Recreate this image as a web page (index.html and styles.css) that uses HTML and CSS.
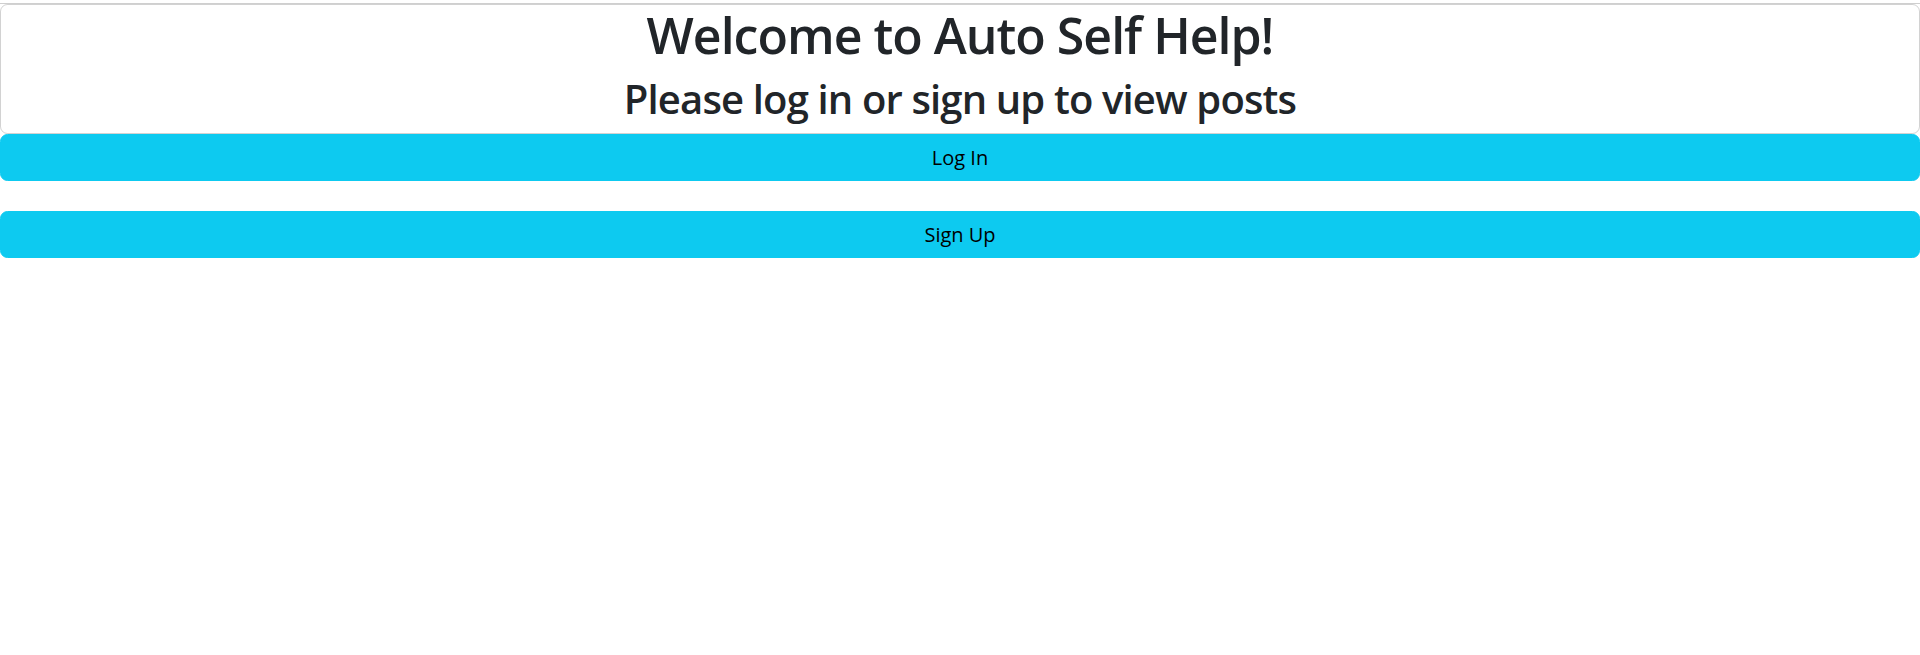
FILE: index.html
```html
<!DOCTYPE html>
<html lang="en">
<head>
<meta charset="utf-8">
<title>Auto Self Help</title>
<link rel="stylesheet" href="styles.css">
</head>
<body>
<div class="page">
  <div class="card">
    <h1 class="title">Welcome to Auto Self Help!</h1>
    <h2 class="subtitle">Please log in or sign up to view posts</h2>
  </div>
  <div class="actions">
    <button class="btn" type="button">Log In</button>
    <button class="btn" type="button">Sign Up</button>
  </div>
</div>
</body>
</html>
```

FILE: styles.css
```css
* { box-sizing: border-box; }
html, body { margin: 0; padding: 0; background: #fff; }
body {
  font-family: "Open Sans", "Noto Sans", "Liberation Sans", sans-serif;
  color: #212529;
  font-size: 20px;
  line-height: 1.5;
}
.page {
  margin-top: 3px;
  border-top: 1px solid #cfcfcf;
}
.card {
  border: 1.25px solid rgba(0, 0, 0, 0.175);
  border-radius: 7.5px;
  text-align: center;
  padding: 0;
}
.title {
  margin: 0 0 10px;
  font-size: 50px;
  font-weight: 600;
  line-height: 1.2;
  letter-spacing: -1px;
}
.subtitle {
  margin: 0 0 10px;
  font-size: 40px;
  font-weight: 600;
  line-height: 1.2;
  letter-spacing: -0.85px;
}
.actions {
  display: flex;
  flex-direction: column;
  gap: 30px;
}
.btn {
  display: block;
  width: 100%;
  font-family: inherit;
  font-size: 20px;
  line-height: 1.5;
  color: #000;
  background: #0dcaf0;
  border: 1.25px solid #0dcaf0;
  border-radius: 7.5px;
  padding: 7.5px 15px;
  text-align: center;
  cursor: pointer;
}
```
